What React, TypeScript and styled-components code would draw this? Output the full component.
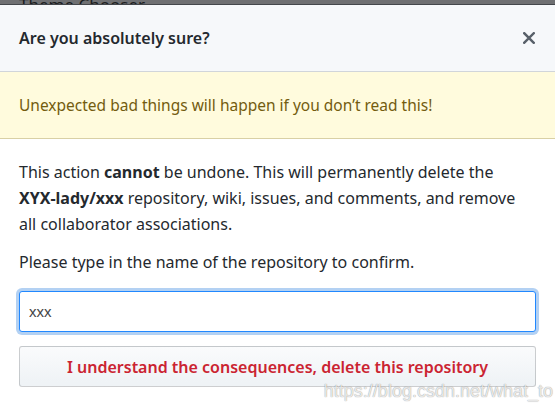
import React from "react";
import styled, { createGlobalStyle } from "styled-components";

const Global = createGlobalStyle`
  html, body { margin: 0; padding: 0; background: #fff; }
  body { font-family: "Noto Sans", "Open Sans", sans-serif; color: #24292e; }
  * { box-sizing: border-box; }
`;

const Page = styled.div`
  width: 555px;
  height: 406px;
  position: relative;
  overflow: hidden;
  background: #fff;
`;

const Backdrop = styled.div`
  height: 5px;
  background: #6f7072;
  overflow: hidden;
  display: flex;
  align-items: flex-end;
  padding-left: 19px;
  border-bottom: 1px solid #44474b;
`;

const BackdropText = styled.span`
  font-size: 17px;
  line-height: 17px;
  color: #1b1d20;
  margin-bottom: -9px;
  white-space: nowrap;
`;

const Header = styled.div`
  height: 67px;
  background: #f6f8fa;
  border-bottom: 1px solid #d1d5da;
  display: flex;
  align-items: center;
  justify-content: space-between;
  padding: 0 20px 0 19px;
`;

const Title = styled.h3`
  margin: 0;
  font-size: 16px;
  font-weight: 600;
  color: #24292e;
`;

const Close = styled.button`
  border: 0;
  background: none;
  padding: 0;
  display: flex;
  color: #586069;
`;

const Flash = styled.div`
  height: 67px;
  background: #fffbdd;
  border-bottom: 1px solid #d9d0a5;
  display: flex;
  align-items: center;
  padding: 0 19px;
  font-size: 15.5px;
  color: #735c0f;
`;

const Body = styled.div`
  padding: 20px 19px 0 19px;
  display: flex;
  flex-direction: column;
`;

const Para = styled.p`
  margin: 0 0 12px 0;
  font-size: 16px;
  line-height: 26px;
  color: #24292e;
  white-space: nowrap;
`;

const Input = styled.input`
  margin-top: 4px;
  height: 41px;
  width: 100%;
  border: 1px solid #2188ff;
  border-radius: 3px;
  box-shadow: 0 0 0 3px rgba(3, 102, 214, 0.3);
  outline: none;
  padding: 0 9px;
  font-family: "Liberation Sans", sans-serif;
  font-size: 15px;
  color: #444;
  caret-color: #000;
`;

const DangerButton = styled.button`
  margin-top: 14px;
  height: 41px;
  width: 100%;
  border: 1px solid rgba(27, 31, 35, 0.2);
  border-radius: 3px;
  background: linear-gradient(-180deg, #fafbfc 0%, #eff3f6 90%);
  color: #cb2431;
  font-family: inherit;
  font-size: 16px;
  font-weight: 600;
`;

const Watermark = styled.span`
  position: absolute;
  right: 2px;
  bottom: 4px;
  font-family: "Liberation Sans", Arial, sans-serif;
  font-size: 18px;
  color: rgba(255, 255, 255, 0.8);
  text-shadow: 0 0 1px rgba(0, 0, 0, 0.35), 0 0 1px rgba(0, 0, 0, 0.2);
`;

export default function App() {
  return (
    <Page>
      <Global />
      <Backdrop>
        <BackdropText>Theme Chooser</BackdropText>
      </Backdrop>
      <Header>
        <Title>Are you absolutely sure?</Title>
        <Close aria-label="Close">
          <svg width="12" height="12" viewBox="0 0 12 12">
            <path d="M1.2 1.2L10.8 10.8M10.8 1.2L1.2 10.8" stroke="currentColor" strokeWidth="2.4" strokeLinecap="square" />
          </svg>
        </Close>
      </Header>
      <Flash>Unexpected bad things will happen if you don’t read this!</Flash>
      <Body>
        <Para>
          This action <b>cannot</b> be undone. This will permanently delete the
          <br />
          <b>XYX-lady/xxx</b> repository, wiki, issues, and comments, and remove
          <br />
          all collaborator associations.
        </Para>
        <Para>Please type in the name of the repository to confirm.</Para>
        <Input defaultValue="xxx" autoFocus />
        <DangerButton>I understand the consequences, delete this repository</DangerButton>
      </Body>
      <Watermark>https://blog.csdn.net/what_to</Watermark>
    </Page>
  );
}
